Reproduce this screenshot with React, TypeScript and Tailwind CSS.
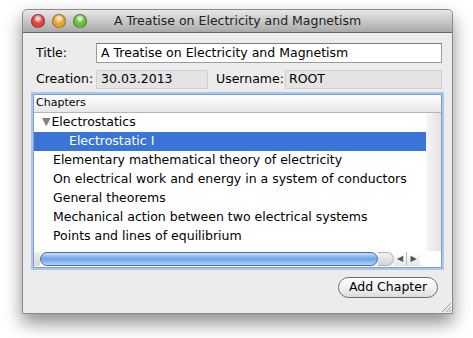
const chapters = [
  'Elementary mathematical theory of electricity',
  'On electrical work and energy in a system of conductors',
  'General theorems',
  'Mechanical action between two electrical systems',
  'Points and lines of equilibrium',
];

function TrafficLight({ color }: { color: string }) {
  return (
    <div
      className="w-[14px] h-[14px] rounded-full border border-[#00000055]"
      style={{ background: `radial-gradient(circle at 50% 30%, #fff 0%, ${color} 45%, ${color} 100%)` }}
    />
  );
}

export default function App() {
  return (
    <div className="w-[473px] h-[338px] bg-white pl-[22px] pt-[9px] font-['DejaVu_Sans',sans-serif] text-[12.5px] text-black overflow-hidden">
      <div className="w-[431px] h-[305px] flex flex-col bg-[#ececec] border border-[#8a8a8a] rounded-t-[5px] shadow-[0_9px_18px_rgba(0,0,0,0.45)]">
        {/* title bar */}
        <div className="h-[23px] flex items-center rounded-t-[5px] bg-gradient-to-b from-[#e8e8e8] to-[#a9a9a9] border-b border-[#656565]">
          <div className="flex gap-[7px] pl-[8px]">
            <TrafficLight color="#e0443e" />
            <TrafficLight color="#e8a530" />
            <TrafficLight color="#6bbf3c" />
          </div>
          <div className="flex-1 text-center pr-[64px] text-[#222] leading-none">A Treatise on Electricity and Magnetism</div>
        </div>

        <div className="flex-1 flex flex-col px-[10px] pt-[10px]">
          {/* title row */}
          <div className="flex items-center h-[20px]">
            <div className="w-[63px] pl-[3px]">Title:</div>
            <div className="flex-1 h-[20px] bg-white border border-[#9c9c9c] border-t-[#7a7a7a] flex items-center pl-[4px]">
              A Treatise on Electricity and Magnetism
            </div>
          </div>

          {/* creation row */}
          <div className="flex items-center h-[19px] mt-[7px]">
            <div className="w-[63px] pl-[3px]">Creation:</div>
            <div className="w-[112px] h-[19px] bg-[#e4e4e4] border border-[#d0d0d0] flex items-center pl-[4px]">30.03.2013</div>
            <div className="w-[77px] pl-[8px]">Username:</div>
            <div className="flex-1 h-[19px] bg-[#e4e4e4] border border-[#d0d0d0] flex items-center pl-[3px]">ROOT</div>
          </div>

          {/* table */}
          <div className="mt-[5px] h-[174px] border border-[#7f9fd0] shadow-[0_0_0_2px_#a9c6f0] flex flex-col bg-white">
            <div className="h-[18px] flex items-center pl-[2px] text-[11px] bg-gradient-to-b from-white to-[#e6e6e6] border-b border-[#b5b5b5]">
              Chapters
            </div>
            <div className="flex-1 flex">
              <div className="flex-1 flex flex-col">
                <div className="h-[19px] flex items-center pl-[8px] gap-[1px]">
                  <span className="text-[#808080] text-[11px]">▼</span>
                  <span>Electrostatics</span>
                </div>
                <div className="h-[19px] flex items-center pl-[35px] bg-[#3875d7] text-white">Electrostatic I</div>
                {chapters.map((c) => (
                  <div key={c} className="h-[19px] flex items-center pl-[19px]">{c}</div>
                ))}
              </div>
              <div className="w-[15px] bg-gradient-to-r from-[#f6f6f6] to-[#e2e2e2]" />
            </div>
            {/* horizontal scroller */}
            <div className="h-[15px] mb-[1px] flex items-center">
              <div className="w-[6px] h-[14px] bg-gradient-to-b from-[#eee] to-[#d8d8d8]" />
              <div className="flex-1 flex items-center h-[14px]">
                <div className="w-[338px] h-[14px] rounded-full border border-[#4a6fa5] bg-gradient-to-b from-[#c8dcf6] via-[#6aa2ea] to-[#b7d2f5]" />
                <div className="w-[16px] h-[14px] rounded-r-full bg-gradient-to-b from-[#f4f4f4] to-[#d4d4d4] border border-l-0 border-[#b0b0b0]" />
                <div className="w-[12px] h-[14px] flex items-center justify-center text-[8px] text-[#555] bg-gradient-to-b from-white to-[#e6e6e6]">◀</div>
                <div className="w-[1px] h-[14px] bg-[#bbb]" />
                <div className="w-[13px] h-[14px] flex items-center justify-center text-[8px] text-[#555] bg-gradient-to-b from-white to-[#e6e6e6]">▶</div>
              </div>
              <div className="w-[15px]" />
            </div>
          </div>

          {/* button */}
          <div className="flex justify-end mt-[9px] pr-[4px]">
            <div className="w-[100px] h-[21px] rounded-full border border-[#6e6e6e] bg-gradient-to-b from-white via-[#f2f2f2] to-[#dcdcdc] flex items-center justify-center">
              Add Chapter
            </div>
          </div>

          {/* resize grip */}
          <div className="flex-1 flex justify-end items-end">
            <svg width="10" height="10" className="mb-[1px] -mr-[9px]">
              <line x1="1" y1="10" x2="10" y2="1" stroke="#999" />
              <line x1="5" y1="10" x2="10" y2="5" stroke="#999" />
              <line x1="8" y1="10" x2="10" y2="8" stroke="#999" />
            </svg>
          </div>
        </div>
      </div>
    </div>
  );
}
